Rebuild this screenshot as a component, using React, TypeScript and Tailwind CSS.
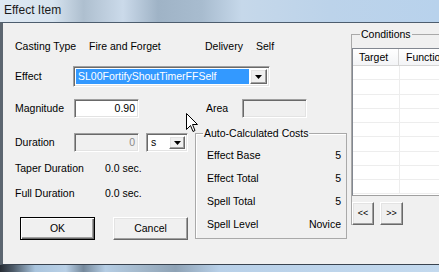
const sunken =
  'border border-t-[#a0a0a0] border-l-[#a0a0a0] border-r-white border-b-white shadow-[inset_1px_1px_0_#696969,inset_-1px_-1px_0_#e3e3e3]';
const raised =
  'bg-[#f0f0f0] border border-t-white border-l-white border-r-[#696969] border-b-[#696969] shadow-[inset_-1px_-1px_0_#a0a0a0,inset_1px_1px_0_#e3e3e3]';

function Arrow() {
  return (
    <svg width="7" height="4" viewBox="0 0 7 4">
      <polygon points="0,0 7,0 3.5,4" fill="#000" />
    </svg>
  );
}

function DropButton({ className }: { className: string }) {
  return (
    <div className={`${raised} ${className} flex items-center justify-center shrink-0`}>
      <Arrow />
    </div>
  );
}

function Cursor() {
  return (
    <svg
      className="absolute left-[186px] top-[113px]"
      width="12"
      height="20"
      viewBox="0 0 12 20"
    >
      <path
        d="M0.5 0.5 L0.5 16.5 L4.5 12.5 L7 18.5 L9 17.5 L6.5 11.5 L11.5 11.5 Z"
        fill="#fff"
        stroke="#000"
        strokeWidth="1"
        strokeLinejoin="miter"
      />
    </svg>
  );
}

export default function App() {
  const costs = [
    { label: 'Effect Base', value: '5' },
    { label: 'Effect Total', value: '5' },
    { label: 'Spell Total', value: '5' },
    { label: 'Spell Level', value: 'Novice' },
  ];
  const rows = Array.from({ length: 9 });

  return (
    <div className="relative w-[439px] h-[272px] overflow-hidden flex flex-col font-['Liberation_Sans',Arial,sans-serif] text-[10.5px] leading-[13px] text-black">
      {/* aero title bar */}
      <div className="h-[22px] shrink-0 pl-[4px] pt-[3px] text-[12px] leading-[15px] text-[#1a1a1a] bg-[linear-gradient(90deg,#dfe9f3_0%,#d6e3ef_12%,#aebfcf_19%,#cbdaea_28%,#9fb3c6_36%,#a8bccf_46%,#c6d8ea_55%,#bcd3ea_75%,#b8d2ec_100%)]">
        Effect Item
      </div>

      {/* client area */}
      <div className="flex-1 flex bg-[#f0f0f0] border-t border-t-[#4d5d6e] border-l-[3px] border-l-[#5c6670] border-b border-b-[#3a4450]">
        <div className="w-[348px] shrink-0 pl-[12px] pt-[17px] flex flex-col">
          {/* casting type */}
          <div className="flex h-[13px]">
            <span className="w-[74px]">Casting Type</span>
            <span className="w-[116px]">Fire and Forget</span>
            <span className="w-[51px]">Delivery</span>
            <span>Self</span>
          </div>

          {/* effect */}
          <div className="mt-[13px] flex items-center h-[21px]">
            <span className="w-[58px]">Effect</span>
            <div className={`${sunken} w-[197px] h-[21px] bg-white flex p-[2px] gap-[1px]`}>
              <div className="flex-1 bg-[#3399ff] text-white pl-[2px] flex items-center">
                SL00FortifyShoutTimerFFSelf
              </div>
              <DropButton className="w-[17px]" />
            </div>
          </div>

          {/* magnitude / area */}
          <div className="mt-[12px] flex items-center h-[19px]">
            <span className="w-[59px]">Magnitude</span>
            <div className={`${sunken} w-[65px] h-[19px] bg-white flex items-center justify-end pr-[3px]`}>
              0.90
            </div>
            <span className="ml-[67px] w-[36px]">Area</span>
            <div className={`${sunken} w-[65px] h-[19px] bg-[#f0f0f0]`} />
          </div>

          {/* lower block */}
          <div className="mt-[9px] flex">
            <div className="w-[180px] shrink-0 flex flex-col">
              <div className="mt-[6px] flex items-center h-[19px]">
                <span className="w-[59px]">Duration</span>
                <div className={`${sunken} w-[65px] h-[19px] bg-[#f0f0f0] flex items-center justify-end pr-[3px] text-[#8a8a8a]`}>
                  0
                </div>
                <div className={`${sunken} ml-[7px] w-[42px] h-[19px] bg-white flex p-[2px]`}>
                  <span className="flex-1 pl-[2px] flex items-center">s</span>
                  <DropButton className="w-[16px]" />
                </div>
              </div>
              <div className="mt-[10px] flex">
                <span className="w-[90px]">Taper Duration</span>
                <span>0.0 sec.</span>
              </div>
              <div className="mt-[12px] flex">
                <span className="w-[90px]">Full Duration</span>
                <span>0.0 sec.</span>
              </div>
              <div className="mt-[17px] pl-[5px] flex gap-[18px]">
                <button className="w-[75px] h-[23px] bg-[#f0f0f0] border border-black shadow-[inset_1px_1px_0_#fff,inset_-1px_-1px_0_#696969,inset_-2px_-2px_0_#a0a0a0]">
                  OK
                </button>
                <button className={`${raised} w-[75px] h-[23px]`}>Cancel</button>
              </div>
            </div>

            <fieldset className="w-[152px] h-[112px] border border-[#a9a9a9] shadow-[inset_1px_1px_0_#fff]">
              <legend className="ml-[7px] px-[1px] leading-[13px]">Auto-Calculated Costs</legend>
              <div className="mt-[9px] pl-[11px] pr-[5px] flex flex-col gap-[10px]">
                {costs.map((c) => (
                  <div key={c.label} className="flex justify-between h-[13px]">
                    <span>{c.label}</span>
                    <span>{c.value}</span>
                  </div>
                ))}
              </div>
            </fieldset>
          </div>
        </div>

        {/* conditions */}
        <div className="flex-1 pt-[5px]">
          <fieldset className="w-[120px] border border-b-0 border-[#a9a9a9]">
            <legend className="ml-[8px] px-[1px] leading-[13px]">Conditions</legend>
            <div className="mt-[7px] w-[110px] h-[148px] border border-t-[#828790] border-l-[#828790] border-r-white border-b-[#a0a0a0] bg-white flex flex-col">
              <div className="h-[17px] shrink-0 flex bg-[linear-gradient(#ffffff,#f3f4f6)] border-b border-b-[#d5d5d5]">
                <div className="w-[46px] pl-[6px] flex items-center border-r border-r-[#d5d5d5]">Target</div>
                <div className="pl-[7px] flex items-center whitespace-nowrap">Function</div>
              </div>
              {rows.map((_, i) => (
                <div key={i} className="h-[14.25px] shrink-0 flex border-b border-b-[#ededed]">
                  <div className="w-[47px] border-r border-r-[#ededed]" />
                </div>
              ))}
            </div>
            <div className="mt-[6px] flex gap-[6px]">
              <button className={`${raised} w-[22px] h-[23px] text-[9px]`}>&lt;&lt;</button>
              <button className={`${raised} w-[23px] h-[23px] text-[9px]`}>&gt;&gt;</button>
            </div>
          </fieldset>
        </div>
      </div>

      {/* bottom aero strip */}
      <div className="h-[7px] shrink-0 bg-[linear-gradient(90deg,#262c34_0%,#4d5b69_3%,#a9c4dd_8%,#b9d0e6_15%,#75899c_19%,#b5cde4_24%,#a3b8cb_32%,#8ea2b5_40%,#b8d0e8_50%,#c3d9ee_100%)]" />

      <Cursor />
    </div>
  );
}
